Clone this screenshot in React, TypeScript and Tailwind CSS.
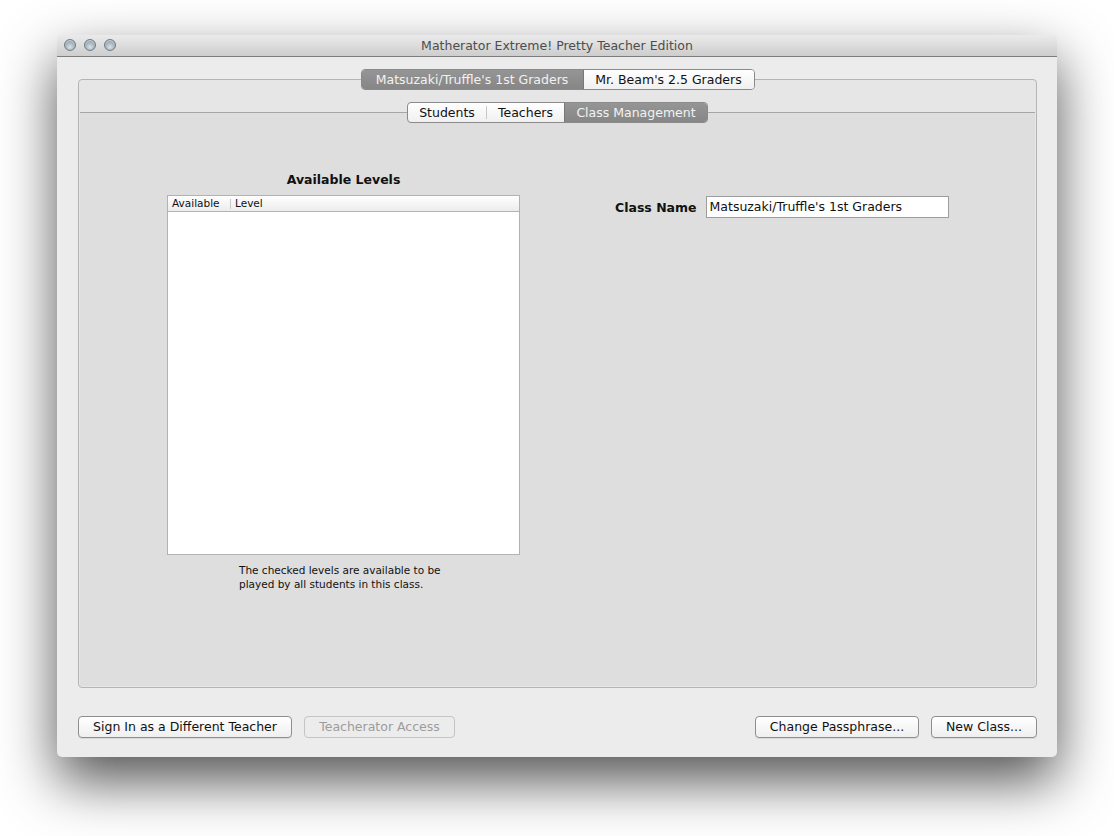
import React from "react";

const font = { fontFamily: '"DejaVu Sans", "Noto Sans", sans-serif' };

function Btn({ children, disabled, w }: { children: React.ReactNode; disabled?: boolean; w: string }) {
  return (
    <div
      className={
        "h-[22px] rounded-[4px] border flex items-center justify-center text-[12.5px] leading-none " +
        w +
        (disabled
          ? " border-[#c4c4c4] bg-[#ececec] text-[#9c9c9c]"
          : " border-[#8e8e8e] bg-gradient-to-b from-white to-[#efefef] text-[#111] shadow-[0_1px_0_rgba(0,0,0,0.08)]")
      }
    >
      {children}
    </div>
  );
}

export default function App() {
  return (
    <div className="w-[1114px] h-[836px] bg-white overflow-hidden" style={font}>
      <div className="pt-[35px] pl-[57px]">
        <div className="w-[1000px] h-[722px] rounded-[5px] bg-[#ececec] flex flex-col shadow-[0_24px_55px_rgba(0,0,0,0.68)] overflow-hidden">
          {/* title bar */}
          <div className="h-[22px] shrink-0 bg-gradient-to-b from-[#ebebeb] to-[#cdcdcd] border-b border-[#7c7c7c] flex items-center relative">
            <div className="flex gap-[8px] pl-[7px] absolute left-0 top-[4px]">
              {[0, 1, 2].map((i) => (
                <div
                  key={i}
                  className="w-[12px] h-[12px] rounded-full border border-[#6f7a82] bg-[radial-gradient(circle_at_50%_70%,#d8e2e8_0%,#a3b0b9_55%,#7b8a94_100%)] shadow-[inset_0_1px_1px_rgba(255,255,255,0.6)]"
                />
              ))}
            </div>
            <div className="flex-1 text-center text-[12.5px] text-[#4d4d4d] leading-none pt-[1px]">
              Matherator Extreme! Pretty Teacher Edition
            </div>
          </div>

          {/* body */}
          <div className="flex-1 flex flex-col px-[20px] pl-[21px] pt-[12px]">
            {/* outer tab area */}
            <div className="relative z-10 flex justify-center h-[21px]">
              <div className="flex h-[21px] rounded-[4px] border border-[#8a8a8a] overflow-hidden text-[12.5px] leading-none">
                <div className="w-[222px] flex items-center justify-center pt-[1px] bg-gradient-to-b from-[#959595] to-[#868686] text-[#f2f2f2] border-r border-[#777]">
                  Matsuzaki/Truffle's 1st Graders
                </div>
                <div className="w-[170px] flex items-center justify-center pt-[1px] bg-gradient-to-b from-white to-[#f0f0f0] text-[#111]">
                  Mr. Beam's 2.5 Graders
                </div>
              </div>
            </div>
            <div className="-mt-[11px] h-[609px] rounded-[4px] border border-[#b4b4b4] bg-[#e6e6e6] flex flex-col px-[1px] pb-[1px]">
              <div className="h-[11px]" />
              {/* inner tabs */}
              <div className="relative z-10 flex justify-center h-[21px] mt-[11px]">
                <div className="flex h-[21px] rounded-[4px] border border-[#8a8a8a] overflow-hidden text-[12.5px] leading-none bg-gradient-to-b from-white to-[#f0f0f0]">
                  <div className="w-[78px] flex items-center justify-center pt-[1px] text-[#111]">Students</div>
                  <div className="w-px my-[3px] bg-[#c8c8c8]" />
                  <div className="w-[77px] flex items-center justify-center pt-[1px] text-[#111]">Teachers</div>
                  <div className="w-[143px] flex items-center justify-center pt-[1px] bg-gradient-to-b from-[#959595] to-[#868686] text-[#f2f2f2] border-l border-[#777]">
                    Class Management
                  </div>
                </div>
              </div>
              <div className="-mt-[11px] flex-1 border-t border-[#a6a6a6] bg-[#dedede] flex">
                {/* left column */}
                <div className="ml-[87px] mt-[58px] w-[353px] flex flex-col">
                  <div className="text-center font-bold text-[12.5px] leading-none text-[#111] h-[24px] pt-[3px]">
                    Available Levels
                  </div>
                  <div className="h-[360px] bg-white border border-[#b2b2b2] flex flex-col">
                    <div className="h-[16px] border-b border-[#b3b3b3] bg-gradient-to-b from-white to-[#ececec] flex items-center text-[10.5px] leading-none text-[#111]">
                      <div className="pl-[4px] w-[63px] border-r border-[#c8c8c8] h-[10px] flex items-center">Available</div>
                      <div className="pl-[4px]">Level</div>
                    </div>
                  </div>
                  <div className="ml-[72px] mt-[8px] text-[10.5px] leading-[14px] text-[#111]">
                    The checked levels are available to be
                    <br />
                    played by all students in this class.
                  </div>
                </div>
                {/* right column */}
                <div className="ml-[95px] mt-[83px] flex items-start">
                  <div className="font-bold text-[12.5px] leading-none text-[#111] mt-[6px]">Class Name</div>
                  <div className="ml-[9px] w-[243px] h-[22px] bg-white border border-[#9d9d9d] flex items-center pl-[3px] pt-[1px] text-[12.5px] leading-none text-[#111]">
                    Matsuzaki/Truffle's 1st Graders
                  </div>
                </div>
              </div>
            </div>
            {/* bottom buttons */}
            <div className="mt-[28px] flex items-center">
              <Btn w="w-[214px]">Sign In as a Different Teacher</Btn>
              <div className="w-[12px]" />
              <Btn w="w-[151px]" disabled>
                Teacherator Access
              </Btn>
              <div className="flex-1" />
              <Btn w="w-[164px]">Change Passphrase...</Btn>
              <div className="w-[12px]" />
              <Btn w="w-[106px]">New Class...</Btn>
            </div>
          </div>
        </div>
      </div>
    </div>
  );
}
